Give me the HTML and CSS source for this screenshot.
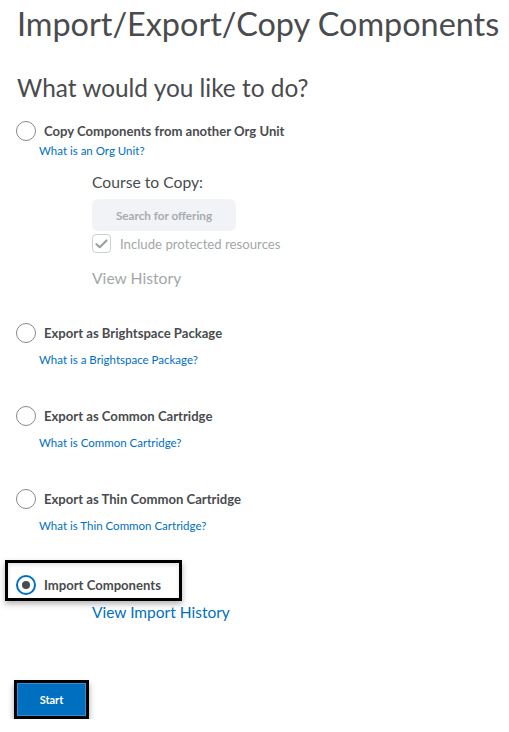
FILE: index.html
```html
<!DOCTYPE html>
<html>
<head>
<meta charset="utf-8">
<link rel="stylesheet" href="styles.css">
</head>
<body>
<div class="page">
  <h1 class="title">Import/Export/Copy Components</h1>
  <h2 class="subtitle">What would you like to do?</h2>

  <div class="option first">
    <div class="radio-row">
      <span class="radio"></span>
      <span class="label">Copy Components from another Org Unit</span>
    </div>
    <a class="help tight">What is an Org Unit?</a>
    <div class="copy-panel">
      <div class="course-label">Course to Copy:</div>
      <div class="search-btn">Search for offering</div>
      <div class="check-row">
        <span class="checkbox"><svg width="13" height="10" viewBox="0 0 13 10"><path d="M1.5 5.2 L4.8 8.2 L11.5 1.5" fill="none" stroke="#9ea1a4" stroke-width="2.2" stroke-linecap="round" stroke-linejoin="round"/></svg></span>
        <span class="check-label">Include protected resources</span>
      </div>
      <div class="view-history">View History</div>
    </div>
  </div>

  <div class="option">
    <div class="radio-row">
      <span class="radio"></span>
      <span class="label">Export as Brightspace Package</span>
    </div>
    <a class="help">What is a Brightspace Package?</a>
  </div>

  <div class="option">
    <div class="radio-row">
      <span class="radio"></span>
      <span class="label">Export as Common Cartridge</span>
    </div>
    <a class="help">What is Common Cartridge?</a>
  </div>

  <div class="option">
    <div class="radio-row">
      <span class="radio"></span>
      <span class="label">Export as Thin Common Cartridge</span>
    </div>
    <a class="help">What is Thin Common Cartridge?</a>
  </div>

  <div class="import">
    <div class="highlight">
      <div class="radio-row">
        <span class="radio checked"></span>
        <span class="label">Import Components</span>
      </div>
    </div>
    <a class="import-history">View Import History</a>
  </div>

  <div class="start-wrap">
    <button class="start">Start</button>
  </div>
</div>
</body>
</html>
```

FILE: styles.css
```css
html, body {
  margin: 0;
  padding: 0;
  background: #ffffff;
}
body {
  font-family: Lato, "Open Sans", sans-serif;
  color: #494c4e;
}
.page {
  padding: 0 0 0 17px;
}
.title {
  margin: 0;
  padding-top: 4px;
  font-size: 32.4px;
  font-weight: 400;
  line-height: 40px;
  color: #494c4e;
  white-space: nowrap;
}
.subtitle {
  margin: 28px 0 0 0;
  font-size: 24.4px;
  font-weight: 400;
  line-height: 32px;
  color: #494c4e;
}
.option {
  margin-top: 38px;
}
.option.first {
  margin-top: 16px;
}
.radio-row {
  display: flex;
  align-items: center;
  height: 22px;
  white-space: nowrap;
}
.radio {
  box-sizing: border-box;
  width: 20px;
  height: 20px;
  border-radius: 50%;
  border: 1.5px solid #868a8d;
  background: #fff;
  margin-left: -1px;
  margin-right: 8px;
  display: flex;
  align-items: center;
  justify-content: center;
  flex: none;
}
.radio.checked {
  border: 2px solid #006fbf;
}
.radio.checked::after {
  content: "";
  width: 8px;
  height: 8px;
  border-radius: 50%;
  background: #494c4e;
}
.label {
  font-size: 13.1px;
  font-weight: 700;
  color: #494c4e;
}
.help {
  display: block;
  margin: 9px 0 0 22px;
  font-size: 11.5px;
  line-height: 14px;
  color: #006fbf;
}
.help.tight {
  margin-top: 2px;
}
.copy-panel {
  margin-left: 75px;
  margin-top: 14px;
  margin-bottom: -4px;
}
.course-label {
  font-size: 15.7px;
  line-height: 20px;
  color: #494c4e;
}
.search-btn {
  margin-top: 7px;
  width: 144px;
  height: 32px;
  border-radius: 6px;
  background: #f1f3f6;
  color: #a8abad;
  font-size: 11.7px;
  font-weight: 700;
  display: flex;
  align-items: center;
  justify-content: center;
}
.check-row {
  display: flex;
  align-items: center;
  margin-top: 3px;
  height: 19px;
}
.checkbox {
  box-sizing: border-box;
  width: 19px;
  height: 19px;
  border: 1px solid #cdd0d2;
  border-radius: 4px;
  display: flex;
  align-items: center;
  justify-content: center;
  margin-right: 9px;
}
.check-label {
  font-size: 13.2px;
  color: #a4a7a9;
}
.view-history {
  margin-top: 15px;
  font-size: 15.7px;
  line-height: 20px;
  color: #a4a7a9;
}
.import {
  margin-top: 27px;
}
.highlight {
  box-sizing: border-box;
  margin-left: -12px;
  padding: 12px 0 0 9px;
  border: 3px solid #000;
  box-shadow: 0 3px 6px rgba(0,0,0,0.3), inset 0 2px 4px rgba(0,0,0,0.12);
  width: 177px;
  height: 41px;
}
.highlight .radio-row {
  height: 20px;
}
.import-history {
  display: block;
  margin: 1px 0 0 75px;
  font-size: 15.5px;
  line-height: 20px;
  color: #006fbf;
}
.start-wrap {
  margin-top: 58px;
}
.start {
  display: block;
  margin-left: -3px;
  box-sizing: border-box;
  width: 75px;
  height: 39px;
  border: 3px solid #000;
  background: #006fbf;
  color: #fff;
  font-family: Lato, sans-serif;
  font-weight: 700;
  font-size: 11px;
  box-shadow: 0 4px 6px rgba(0,0,0,0.35), inset 0 0 0 1px #3a8bd0;
  padding: 0;
}
```
